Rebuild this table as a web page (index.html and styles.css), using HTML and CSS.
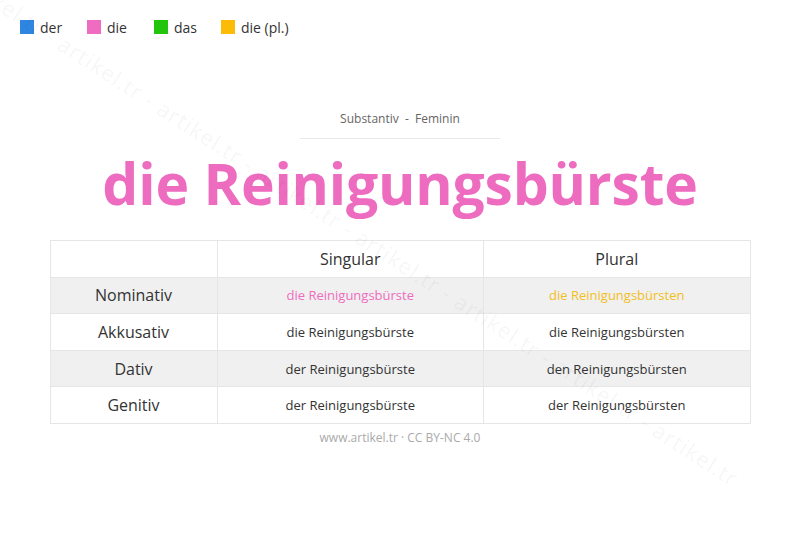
FILE: index.html
```html
<!DOCTYPE html>
<html lang="de">
<head>
<meta charset="utf-8">
<title>die Reinigungsbürste</title>
<link rel="stylesheet" href="styles.css">
</head>
<body>
<div class="watermark" aria-hidden="true">artikel.tr - artikel.tr - artikel.tr - artikel.tr - artikel.tr - artikel.tr - artikel.tr - artikel.tr</div>
<div class="legend">
  <span class="leg"><i class="sw sw-der"></i>der</span>
  <span class="leg"><i class="sw sw-die"></i>die</span>
  <span class="leg"><i class="sw sw-das"></i>das</span>
  <span class="leg leg-last"><i class="sw sw-pl"></i>die (pl.)</span>
</div>
<main class="card">
  <div class="kind">Substantiv &nbsp;-&nbsp; Feminin</div>
  <h1 class="word">die Reinigungsbürste</h1>
  <table class="decl">
    <tr class="head"><th></th><th>Singular</th><th>Plural</th></tr>
    <tr class="alt"><th>Nominativ</th><td class="c-die">die Reinigungsbürste</td><td class="c-pl">die Reinigungsbürsten</td></tr>
    <tr><th>Akkusativ</th><td>die Reinigungsbürste</td><td>die Reinigungsbürsten</td></tr>
    <tr class="alt"><th>Dativ</th><td>der Reinigungsbürste</td><td>den Reinigungsbürsten</td></tr>
    <tr><th>Genitiv</th><td>der Reinigungsbürste</td><td>der Reinigungsbürsten</td></tr>
  </table>
  <div class="foot">www.artikel.tr · CC BY-NC 4.0</div>
</main>
</body>
</html>
```
FILE: styles.css
```css
html, body {
  margin: 0;
  padding: 0;
  background: #fff;
}
body {
  width: 800px;
  height: 533px;
  overflow: hidden;
  position: relative;
  font-family: "Open Sans", "Noto Sans", sans-serif;
  color: #333;
}
.watermark {
  position: absolute;
  left: -30px;
  top: -36px;
  transform-origin: 0 0;
  transform: rotate(33deg);
  white-space: nowrap;
  font-size: 22px;
  color: rgba(0,0,0,0.05);
  letter-spacing: 1px;
  pointer-events: none;
}
.legend {
  display: flex;
  padding: 17px 0 0 20px;
  height: 20px;
  align-items: center;
}
.leg {
  display: flex;
  align-items: center;
  font-size: 14px;
  color: #333;
  width: 67px;
  flex: none;
  white-space: nowrap;
}
.leg-last { width: auto; }
.sw {
  display: inline-block;
  width: 14px;
  height: 14px;
  margin-right: 6px;
}
.sw-der { background: #2f86e0; }
.sw-die { background: #f06cc1; }
.sw-das { background: #22c40c; }
.sw-pl { background: #fbbb07; }
.card {
  display: flex;
  flex-direction: column;
  align-items: center;
  padding-top: 73px;
}
.kind {
  font-size: 12px;
  color: #666;
  width: 200px;
  text-align: center;
  padding-bottom: 10px;
  border-bottom: 1px solid #e8e8e8;
  line-height: 18px;
}
.word {
  margin: 4px 0 0;
  font-size: 57px;
  font-weight: 700;
  color: #ee6cbf;
  line-height: 80px;
  height: 97px;
  letter-spacing: -0.2px;
}
.decl {
  border-collapse: collapse;
  width: 701px;
  table-layout: fixed;
}
.decl th, .decl td {
  border: 1px solid #e6e6e6;
  text-align: center;
  height: 35.6px;
  padding: 0;
}
.decl th:first-child { width: 166px; }
.decl th { font-weight: 400; font-size: 16px; color: #333; }
.decl td { font-size: 13px; color: #333; }
.decl tr.alt { background: #f0f0f0; }
.decl .c-die { color: #ee6cbf; }
.decl .c-pl { color: #f3be1d; }
.foot {
  margin-top: 5px;
  font-size: 12px;
  color: #aaa;
}
```
